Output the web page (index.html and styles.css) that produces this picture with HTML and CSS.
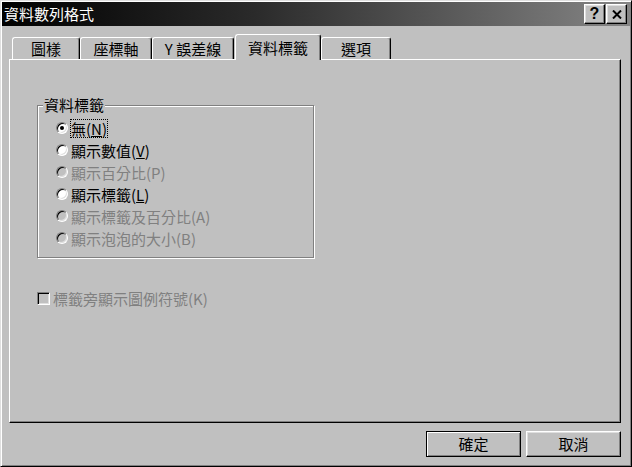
FILE: index.html
```html
<!DOCTYPE html>
<html lang="zh-Hant">
<head>
    <meta charset="UTF-8">
    <meta name="viewport" content="width=device-width, initial-scale=1.0">
    <title>資料數列格式</title>
    <link rel="stylesheet" href="styles.css">
</head>
<body>
    <div class="window">
        <div class="titlebar">
            <span class="title">資料數列格式</span>
            <div class="caption-buttons">
                <button class="caption-btn help">?</button>
                <button class="caption-btn close">
                    <svg width="10" height="9" viewBox="0 0 10 9">
                        <path d="M1 0.5 L9 8.5 M9 0.5 L1 8.5" stroke="#000" stroke-width="2" fill="none"/>
                    </svg>
                </button>
            </div>
        </div>
        <div class="dialog-body">
            <div class="tabs">
                <div class="tab tab-pattern">圖樣</div>
                <div class="tab tab-axis">座標軸</div>
                <div class="tab tab-error">Y 誤差線</div>
                <div class="tab tab-labels selected">資料標籤</div>
                <div class="tab tab-options">選項</div>
            </div>
            <div class="tab-panel">
                <div class="groupbox">
                    <span class="group-label">資料標籤</span>
                    <div class="option">
                        <span class="radio checked"></span>
                        <span class="label focus">無(<u>N</u>)</span>
                    </div>
                    <div class="option">
                        <span class="radio"></span>
                        <span class="label">顯示數值(<u>V</u>)</span>
                    </div>
                    <div class="option disabled">
                        <span class="radio"></span>
                        <span class="label">顯示百分比(P)</span>
                    </div>
                    <div class="option">
                        <span class="radio"></span>
                        <span class="label">顯示標籤(<u>L</u>)</span>
                    </div>
                    <div class="option disabled">
                        <span class="radio"></span>
                        <span class="label">顯示標籤及百分比(A)</span>
                    </div>
                    <div class="option disabled">
                        <span class="radio"></span>
                        <span class="label">顯示泡泡的大小(B)</span>
                    </div>
                </div>
                <div class="check-row disabled">
                    <span class="checkbox"></span>
                    <span class="label">標籤旁顯示圖例符號(K)</span>
                </div>
            </div>
            <div class="buttons">
                <button class="btn default">確定</button>
                <button class="btn">取消</button>
            </div>
        </div>
    </div>
</body>
</html>
```

FILE: styles.css
```css
body {
    margin: 0;
    background-color: #c0c0c0;
    font-family: "Noto Sans CJK TC", sans-serif;
    font-size: 15px;
    color: #000;
}

.window {
    width: 632px;
    height: 467px;
    box-sizing: border-box;
    border: 1px solid;
    border-color: #dfdfdf #000 #000 #dfdfdf;
    box-shadow: inset 1px 1px #fff, inset -1px -1px #808080;
    padding: 1px;
    display: flex;
    flex-direction: column;
}

.titlebar {
    height: 24px;
    flex-shrink: 0;
    background: linear-gradient(to right, #000 0%, #2a2a2a 40%, #858585 100%);
    display: flex;
    align-items: center;
    justify-content: space-between;
    padding: 0 3px 0 2px;
}

.title {
    color: #fff;
    line-height: 18px;
}

.caption-buttons {
    display: flex;
    gap: 1px;
}

.caption-btn {
    width: 21px;
    height: 20px;
    box-sizing: border-box;
    padding: 0;
    background-color: #c0c0c0;
    border: 1px solid;
    border-color: #fff #000 #000 #fff;
    box-shadow: inset -1px -1px #808080, inset 1px 1px #dfdfdf;
    display: flex;
    align-items: center;
    justify-content: center;
    font-family: "Liberation Sans", sans-serif;
    font-weight: bold;
    font-size: 16px;
    line-height: 16px;
}

.dialog-body {
    flex: 1;
    padding: 8px 9px 8px 7px;
    display: flex;
    flex-direction: column;
}

.tabs {
    display: flex;
    align-items: flex-end;
    height: 25px;
    padding-left: 3px;
}

.tab {
    height: 22px;
    box-sizing: border-box;
    border: 1px solid;
    border-bottom: none;
    border-color: #fff #000 #000 #fff;
    border-radius: 3px 3px 0 0;
    box-shadow: inset -1px 0 #808080;
    display: flex;
    align-items: center;
    justify-content: center;
    line-height: 18px;
}

.tab-pattern { width: 68px; }
.tab-axis { width: 72px; }
.tab-error { width: 82px; }
.tab-options { width: 70px; }

.tab.selected {
    width: 86px;
    height: 26px;
    margin: 0 0 -1px 1px;
    position: relative;
    z-index: 1;
    background-color: #c0c0c0;
}

.tab-panel {
    height: 364px;
    box-sizing: border-box;
    border: 1px solid;
    border-color: #fff #000 #000 #fff;
    box-shadow: inset -1px -1px #808080;
    padding: 45px 0 0 27px;
}

.groupbox {
    position: relative;
    width: 277px;
    height: 153px;
    box-sizing: border-box;
    border: 1px solid #808080;
    box-shadow: inset 1px 1px #fff, 1px 1px #fff;
    padding: 11px 0 0 18px;
}

.group-label {
    position: absolute;
    top: -9px;
    left: 5px;
    padding: 0 1px;
    line-height: 16px;
    background-color: #c0c0c0;
}

.option {
    display: flex;
    align-items: center;
    height: 22px;
}

.radio {
    width: 12px;
    height: 12px;
    box-sizing: border-box;
    border-radius: 50%;
    border: 1px solid;
    border-color: #808080 #fff #fff #808080;
    box-shadow: inset 1px 1px #000, inset -1px -1px #dfdfdf;
    background-color: #fff;
    margin-right: 2px;
    display: flex;
    align-items: center;
    justify-content: center;
}

.radio.checked::after {
    content: "";
    width: 4px;
    height: 4px;
    border-radius: 50%;
    background-color: #000;
}

.label {
    border: 1px solid transparent;
    line-height: 17px;
}

.label.focus {
    border: 1px dotted #000;
}

.disabled .label {
    color: #808080;
}

.disabled .radio {
    background-color: #c0c0c0;
}

.check-row {
    margin-top: 32px;
    height: 17px;
    display: flex;
    align-items: center;
}

.checkbox {
    width: 13px;
    height: 13px;
    box-sizing: border-box;
    border: 1px solid;
    border-color: #808080 #fff #fff #808080;
    box-shadow: inset 1px 1px #000, inset -1px -1px #dfdfdf;
    background-color: #c0c0c0;
    margin-right: 3px;
}

.check-row .label {
    border: none;
}

.buttons {
    margin-top: 8px;
    display: flex;
    justify-content: flex-end;
    gap: 5px;
}

.btn {
    width: 95px;
    height: 26px;
    box-sizing: border-box;
    padding: 0;
    background-color: #c0c0c0;
    border: 1px solid;
    border-color: #fff #000 #000 #fff;
    box-shadow: inset -1px -1px #808080, inset 1px 1px #dfdfdf;
    font-family: inherit;
    font-size: 15px;
    line-height: 18px;
    color: #000;
}

.btn.default {
    border-color: #000;
    box-shadow: inset 1px 1px #fff, inset -1px -1px #808080;
}
```
